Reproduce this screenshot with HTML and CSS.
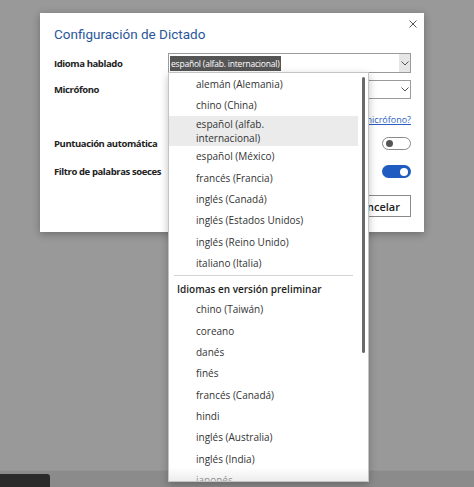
FILE: index.html
```html
<!DOCTYPE html>
<html lang="es">
<head>
<meta charset="utf-8">
<link rel="stylesheet" href="styles.css">
</head>
<body>
<div class="screen">
  <div class="overlay">
    <div class="dialog">
      <div class="dialog-head">
        <h1 class="title">Configuración de Dictado</h1>
        <span class="close"><svg width="8" height="8" viewBox="0 0 8 8"><path d="M0.5 0.5 L7.5 7.5 M7.5 0.5 L0.5 7.5" stroke="#555" stroke-width="1"/></svg></span>
      </div>
      <div class="form">
        <div class="label">Idioma hablado</div>
        <div class="select">
          <span class="select-value sel">español (alfab. internacional)</span>
          <span class="select-arrow"><svg width="8" height="5" viewBox="0 0 8 5"><path d="M0.5 0.5 L4 4 L7.5 0.5" fill="none" stroke="#555" stroke-width="1"/></svg></span>
        </div>
        <div class="label r2">Micrófono</div>
        <div class="select r2">
          <span class="select-value"></span>
          <span class="select-arrow plain"><svg width="8" height="5" viewBox="0 0 8 5"><path d="M0.5 0.5 L4 4 L7.5 0.5" fill="none" stroke="#555" stroke-width="1"/></svg></span>
        </div>
        <div></div>
        <div class="link-row"><a class="link">¿Problemas con el micrófono?</a></div>
        <div class="label">Puntuación automática</div>
        <div class="toggle-cell"><span class="toggle off"><span class="knob"></span></span></div>
        <div class="label">Filtro de palabras soeces</div>
        <div class="toggle-cell"><span class="toggle on"><span class="knob"></span></span></div>
      </div>
      <div class="buttons">
        <button class="btn primary">Aceptar</button>
        <button class="btn">Cancelar</button>
      </div>
    </div>

    <div class="dropdown">
      <ul class="list">
        <li class="item">alemán (Alemania)</li>
        <li class="item">chino (China)</li>
        <li class="item active">español (alfab.<br>internacional)</li>
        <li class="item">español (México)</li>
        <li class="item">francés (Francia)</li>
        <li class="item">inglés (Canadá)</li>
        <li class="item">inglés (Estados Unidos)</li>
        <li class="item">inglés (Reino Unido)</li>
        <li class="item">italiano (Italia)</li>
        <li class="sep"></li>
        <li class="group">Idiomas en versión preliminar</li>
        <li class="item">chino (Taiwán)</li>
        <li class="item">coreano</li>
        <li class="item">danés</li>
        <li class="item">finés</li>
        <li class="item">francés (Canadá)</li>
        <li class="item">hindi</li>
        <li class="item">inglés (Australia)</li>
        <li class="item">inglés (India)</li>
        <li class="item">japonés</li>
      </ul>
      <span class="thumb"></span>
      <span class="fade"></span>
    </div>
  </div>
  <div class="taskbar">
    <span class="dark-tab"></span>
  </div>
</div>
</body>
</html>
```

FILE: styles.css
```css
* { box-sizing: border-box; }
html, body { margin: 0; padding: 0; }
body {
  width: 474px;
  height: 487px;
  overflow: hidden;
  font-family: "Open Sans", "Noto Sans", sans-serif;
  color: #333;
  background: #989898;
}
.screen {
  width: 474px;
  height: 487px;
  display: flex;
  flex-direction: column;
}
.overlay {
  position: relative;
  height: 470px;
  padding: 13px 0 0 40px;
  background: #999999;
}
.taskbar {
  height: 17px;
  background: #8b8b8b;
  border-top: 1px solid #949494;
  display: flex;
  align-items: flex-end;
}
.dark-tab {
  width: 50px;
  height: 13px;
  background: #2a2a2a;
  border-top-right-radius: 3px;
}

.dialog {
  width: 384px;
  height: 219px;
  background: #fff;
  box-shadow: 0 2px 8px rgba(0,0,0,0.3);
  padding: 0 13px 0 14px;
  display: flex;
  flex-direction: column;
}
.dialog-head {
  display: flex;
  justify-content: space-between;
  align-items: flex-start;
  padding-top: 11px;
  height: 40px;
}
.title {
  margin: 0;
  font-family: Roboto, "Open Sans", sans-serif;
  font-size: 13.5px;
  line-height: 20px;
  font-weight: 400;
  color: #2b579a;
}
.close {
  display: flex;
  margin-top: -4px;
  margin-right: -6px;
}
.form {
  display: grid;
  grid-template-columns: 114px 243px;
  grid-template-rows: 20px 26px 33px 23px 33px;
  align-items: center;
}
.label {
  font-size: 9.5px;
  font-weight: 700;
  letter-spacing: -0.4px;
  color: #222;
  white-space: nowrap;
}
.r2 { margin-top: 7px; }
.select {
  height: 20px;
  border: 1px solid #9a9a9a;
  display: flex;
  align-items: center;
  justify-content: space-between;
  font-size: 8.5px;
}
.select.r2 { height: 19px; }
.select-value { padding: 0 2px; line-height: 15px; white-space: nowrap; }
.select-value.sel {
  background: #555;
  color: #fff;
  margin-left: 1px;
  padding: 0 1px;
  letter-spacing: -0.2px;
}
.select-arrow {
  width: 11px;
  height: 18px;
  background: #e6e6e6;
  display: flex;
  align-items: center;
  justify-content: center;
}
.select-arrow.plain { background: #fff; height: 17px; }
.link-row {
  align-self: start;
  text-align: right;
  padding-top: 11px;
  line-height: 14px;
}
.link {
  font-size: 9px;
  color: #2b5fc4;
  text-decoration: underline;
}
.toggle-cell {
  display: flex;
  justify-content: flex-end;
  align-items: center;
}
.toggle {
  width: 29px;
  height: 13px;
  border-radius: 7px;
  display: flex;
  align-items: center;
  padding: 0 3px;
}
.toggle.off { border: 1px solid #8a8a8a; background: #fff; }
.toggle.off .knob { width: 7px; height: 7px; border-radius: 50%; background: #555; }
.toggle.on { background: #1f5bc0; justify-content: flex-end; }
.toggle.on .knob { width: 8px; height: 8px; border-radius: 50%; background: #fff; }
.buttons {
  display: flex;
  justify-content: flex-end;
  gap: 8px;
  margin-top: 7px;
}
.btn {
  font-family: inherit;
  font-size: 11px;
  font-weight: 600;
  color: #222;
  height: 22px;
  padding: 0 10px;
  background: #fff;
  border: 1px solid #8a8a8a;
}
.btn.primary { background: #2b579a; color: #fff; border-color: #2b579a; }

.dropdown {
  position: absolute;
  left: 168px;
  top: 72px;
  width: 201px;
  height: 410px;
  background: #fff;
  border: 1px solid #c4c4c4;
  box-shadow: 0 3px 8px rgba(0,0,0,0.25);
  overflow: hidden;
}
.list {
  list-style: none;
  margin: 0;
  padding: 0;
  width: 189px;
}
.item {
  min-height: 21.33px;
  display: flex;
  align-items: center;
  padding: 1px 0 1px 27px;
  font-size: 10px;
  line-height: 14px;
  color: #333;
}
.item.active { background: #ebebeb; }
.sep {
  height: 1px;
  background: #d4d4d4;
  margin: 1px 5px 3px 5px;
}
.group {
  min-height: 20px;
  display: flex;
  align-items: center;
  padding-left: 8px;
  font-size: 10px;
  font-weight: 600;
  color: #222;
}
.thumb {
  position: absolute;
  left: 193px;
  top: 4px;
  width: 3px;
  height: 276px;
  background: #6a6a6a;
  border-radius: 2px;
}
.fade {
  position: absolute;
  left: 0;
  right: 0;
  bottom: 0;
  height: 14px;
  background: linear-gradient(rgba(230,230,230,0), rgba(225,225,225,0.6));
}
```
